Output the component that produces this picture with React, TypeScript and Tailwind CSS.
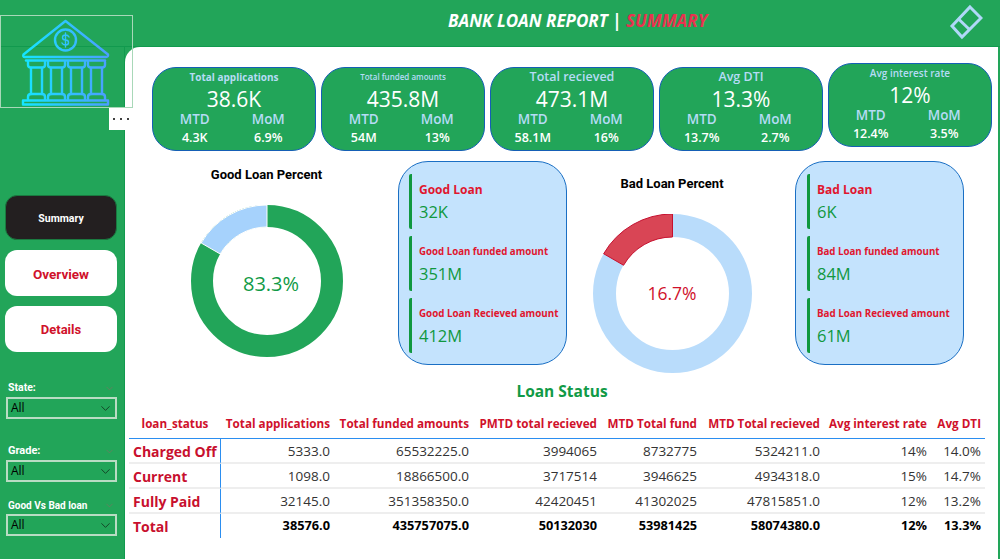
import { ChevronDown } from 'lucide-react';

const kpis = [
  { title: 'Total applications', titleClass: 'text-[10px] font-bold', value: '38.6K', mtd: '4.3K', mom: '6.9%' },
  { title: 'Total funded amounts', titleClass: 'text-[8px] font-semibold', value: '435.8M', mtd: '54M', mom: '13%' },
  { title: 'Total recieved', titleClass: 'text-[12.5px] font-semibold', value: '473.1M', mtd: '58.1M', mom: '16%' },
  { title: 'Avg DTI', titleClass: 'text-[12.5px] font-semibold', value: '13.3%', mtd: '13.7%', mom: '2.7%' },
  { title: 'Avg interest rate', titleClass: 'text-[10px] font-semibold', value: '12%', mtd: '12.4%', mom: '3.5%', raised: true },
];

const rows = [
  ['Charged Off', '5333.0', '65532225.0', '3994065', '8732775', '5324211.0', '14%', '14.0%'],
  ['Current', '1098.0', '18866500.0', '3717514', '3946625', '4934318.0', '15%', '14.7%'],
  ['Fully Paid', '32145.0', '351358350.0', '42420451', '41302025', '47815851.0', '12%', '13.2%'],
];
const totals = ['Total', '38576.0', '435757075.0', '50132030', '53981425', '58074380.0', '12%', '13.3%'];
const headers = ['Total applications', 'Total funded amounts', 'PMTD total recieved', 'MTD Total fund', 'MTD Total recieved', 'Avg interest rate', 'Avg DTI'];

const BankLogo = () => (
  <svg width="100" height="92" viewBox="0 0 100 92" fill="none" strokeWidth="2.4" strokeLinejoin="round" strokeLinecap="round">
    <defs>
      <linearGradient id="bank" gradientUnits="userSpaceOnUse" x1="8" y1="0" x2="94" y2="0">
        <stop offset="0" stopColor="#14e6ff" />
        <stop offset="1" stopColor="#4c9dff" />
      </linearGradient>
    </defs>
    <g stroke="url(#bank)">
      <path d="M50.5 5 L93 38.5 Q93.5 41 91 41 H10 Q7.5 41 8.5 38.5 Z" />
      <circle cx="50.5" cy="24" r="10.5" />
      <path d="M11 44.5 H90" />
      <path d="M8 84.5 H93 V88.5 H8 Z" />
      <path d="M13 46 V49 Q13 51.5 16 51.5 H27 Q30 51.5 30 49 V46" />
      <path d="M33 46 V49 Q33 51.5 36 51.5 H47 Q50 51.5 50 49 V46" />
      <path d="M53 46 V49 Q53 51.5 56 51.5 H67 Q70 51.5 70 49 V46" />
      <path d="M73 46 V49 Q73 51.5 76 51.5 H87 Q90 51.5 90 49 V46" />
      <path d="M16 52 V78 M27 52 V78 M36 52 V78 M47 52 V78 M56 52 V78 M67 52 V78 M76 52 V78 M87 52 V78" />
      <path d="M13 84 V81 Q13 78 16 78 H27 Q30 78 30 81 V84" />
      <path d="M33 84 V81 Q33 78 36 78 H47 Q50 78 50 81 V84" />
      <path d="M53 84 V81 Q53 78 56 78 H67 Q70 78 70 81 V84" />
      <path d="M73 84 V81 Q73 78 76 78 H87 Q90 78 90 81 V84" />
      <path d="M54 21 Q53 19 50.5 19 Q47.5 19 47.5 21.5 Q47.5 24 50.5 24 Q53.5 24 53.5 26.5 Q53.5 29 50.5 29 Q48 29 47 27 M50.5 17 V31" strokeWidth="1.4" />
    </g>
  </svg>
);

const DiamondIcon = () => (
  <svg width="34" height="36" viewBox="0 0 34 36" fill="none" stroke="#b0d8f8" strokeWidth="3" strokeLinejoin="miter">
    <path d="M21 3 L32 14 L13 33 L3 22 Z" />
    <path d="M9 14.5 L21 26" />
  </svg>
);

const polar = (c: number, r: number, deg: number) => {
  const a = ((deg - 90) * Math.PI) / 180;
  return `${c + r * Math.cos(a)} ${c + r * Math.sin(a)}`;
};

// ring with the small slice drawn from 12 o'clock going counter-clockwise
const Donut = ({ size, thick, main, slice, sliceStroke, seam, label, labelClass }: {
  size: number; thick: number; main: string; slice: string; sliceStroke?: string; seam: string; label: string; labelClass: string;
}) => {
  const c = size / 2;
  const r = c - thick / 2;
  const o = c;
  const i = c - thick;
  const path = `M${polar(c, o, 0)} A${o} ${o} 0 0 0 ${polar(c, o, -60)} L${polar(c, i, -60)} A${i} ${i} 0 0 1 ${polar(c, i, 0)} Z`;
  return (
    <div className="relative" style={{ width: size, height: size }}>
      <svg width={size} height={size} viewBox={`0 0 ${size} ${size}`}>
        <circle cx={c} cy={c} r={r} fill="none" stroke={main} strokeWidth={thick} />
        <path d={path} fill={slice} stroke={sliceStroke ?? seam} strokeWidth="1" />
      </svg>
      <div className={`absolute inset-0 flex items-center justify-center font-normal ${labelClass}`}>{label}</div>
    </div>
  );
};

const LoanPanel = ({ items, inset }: { items: { label: string; labelClass: string; value: string }[]; inset: string }) => (
  <div className={`w-[169px] h-[204px] rounded-[30px] border border-[#1a6fc4] bg-[#c4e3fd] pt-[12px] flex flex-col gap-[7px] ${inset}`}>
    {items.map((item) => (
      <div key={item.label} className="h-[55px] border-l-[3px] border-[#10983f] rounded-l-[2px] pl-[7px] pt-[2px] flex flex-col justify-center">
        <div className={`text-[#e0162e] font-bold leading-[16px] ${item.labelClass}`}>{item.label}</div>
        <div className="text-[#10983f] text-[16.5px] leading-[24px] mt-[2px]">{item.value}</div>
      </div>
    ))}
  </div>
);

const KpiCard = ({ kpi }: { kpi: (typeof kpis)[number] }) => (
  <div className={`w-[164px] h-[84px] rounded-[24px] border border-[#155fb5] bg-[#22a559] text-white flex flex-col items-center ${kpi.raised ? '-mt-[4px]' : ''}`}>
    <div className={`text-[#b6dcf6] leading-[16px] h-[17px] flex items-center ${kpi.titleClass}`}>{kpi.title}</div>
    <div className="text-[21px] leading-[20px] mt-[4px]">{kpi.value}</div>
    <div className="w-full grid grid-cols-2 pl-[5px] pr-[10px] mt-[2px]">
      <div className="text-center">
        <div className="text-[#b6dcf6] text-[13.5px] font-semibold leading-[17px]">MTD</div>
        <div className="text-[12.5px] font-semibold leading-[16px] mt-[2px]">{kpi.mtd}</div>
      </div>
      <div className="text-center">
        <div className="text-[#b6dcf6] text-[13.5px] font-semibold leading-[17px]">MoM</div>
        <div className="text-[12.5px] font-semibold leading-[16px] mt-[2px]">{kpi.mom}</div>
      </div>
    </div>
  </div>
);

const Filter = ({ label, spacing, size }: { label: string; spacing: string; size: string }) => (
  <div className={spacing}>
    <div className={`flex items-center justify-between pl-[8px] pr-[9px] h-[14px] text-white font-bold font-['Roboto',sans-serif] ${size}`}>
      <span>{label}</span>
      <ChevronDown size={11} className="text-[#8c6a62]" strokeWidth={1.2} />
    </div>
    <div className="ml-[6px] w-[111px] h-[22px] mt-[2px] border-2 border-[#b9dcc4] flex items-center justify-between pl-[3px] pr-[2px] text-[12px] text-black">
      <span>All</span>
      <ChevronDown size={15} className="text-[#10301c]" strokeWidth={1.3} />
    </div>
  </div>
);

const App = () => {
  return (
    <div className="w-[1000px] h-[559px] overflow-hidden bg-[#22a559] flex flex-col font-['Open_Sans',sans-serif]">
      <header className="h-[47px] shrink-0 flex items-center relative border-b border-[#119a4e]">
        <div className="ml-[448px] -mt-[4px] text-[17px] font-bold italic text-white">
          BANK LOAN REPORT | <span className="text-[#e8324f]">SUMMARY</span>
        </div>
        <div className="absolute right-[17px] top-[4px]">
          <DiamondIcon />
        </div>
      </header>
      <div className="flex flex-1 min-h-0">
        <aside className="w-[125px] shrink-0 border-r border-[#119a4e] flex flex-col relative">
          <div className="relative z-10 -mt-[32px] w-[133px] h-[93px] border border-[#a8d8b8] pl-[14px] shrink-0">
            <BankLogo />
          </div>
          <div className="absolute left-[109px] top-[61px] w-[22px] h-[22px] bg-white flex items-center pl-[4px] gap-[5px] z-10">
            <span className="w-[2px] h-[2px] rounded-full bg-black" />
            <span className="w-[2px] h-[2px] rounded-full bg-black" />
            <span className="w-[2px] h-[2px] rounded-full bg-black" />
          </div>
          <nav className="mt-[87px] pl-[5px] flex flex-col gap-[10px] w-[117px] font-['Roboto',sans-serif]">
            <div className="h-[45px] rounded-[12px] bg-[#231f20] border border-[#1a7a40] pt-[2px] text-white text-[10.5px] font-bold flex items-center justify-center">Summary</div>
            <div className="h-[46px] rounded-[12px] bg-white pt-[3px] text-[#d0112b] text-[13.5px] font-bold flex items-center justify-center">Overview</div>
            <div className="h-[46px] rounded-[12px] bg-white pt-[2px] text-[#d0112b] text-[13px] font-bold flex items-center justify-center">Details</div>
          </nav>
          <Filter label="State:" spacing="mt-[29px]" size="text-[10.5px]" />
          <Filter label="Grade:" spacing="mt-[25px]" size="text-[11px]" />
          <Filter label="Good Vs Bad loan" spacing="mt-[16px]" size="text-[10px]" />
        </aside>
        <main className="flex-1 mr-[2px] bg-white rounded-tl-[15px] flex flex-col min-w-0">
          <section className="flex gap-[5px] pl-[27px] pt-[20px]">
            {kpis.map((kpi) => (
              <KpiCard key={kpi.title} kpi={kpi} />
            ))}
          </section>
          <section className="flex mt-[10px] h-[204px]">
            <div className="ml-[54px] w-[175px] flex flex-col items-center">
              <div className="text-[13px] font-bold text-black font-['Roboto',sans-serif] leading-[16px] mt-[6px]">Good Loan Percent</div>
              <div className="mt-[22px]">
                <Donut size={152} thick={22} main="#22a559" slice="#a6d2fc" seam="#ffffff" label="83.3%" labelClass="text-[20px] text-[#109a46] pl-[9px] pt-[5px]" />
              </div>
            </div>
            <div className="ml-[44px]">
              <LoanPanel
                inset="pl-[10px]"
                items={[
                  { label: 'Good Loan', labelClass: 'text-[12px]', value: '32K' },
                  { label: 'Good Loan funded amount', labelClass: 'text-[9.7px]', value: '351M' },
                  { label: 'Good Loan Recieved amount', labelClass: 'text-[9.8px]', value: '412M' },
                ]}
              />
            </div>
            <div className="ml-[16px] w-[178px] flex flex-col items-center">
              <div className="text-[13px] font-bold text-black font-['Roboto',sans-serif] leading-[16px] mt-[15px]">Bad Loan Percent</div>
              <div className="mt-[22px]">
                <Donut size={159} thick={23} main="#b9dcfb" slice="#d94555" sliceStroke="#c8102e" seam="#ffffff" label="16.7%" labelClass="text-[17.5px] text-[#d0112b]" />
              </div>
            </div>
            <div className="ml-[34px]">
              <LoanPanel
                inset="pl-[11px]"
                items={[
                  { label: 'Bad Loan', labelClass: 'text-[12px]', value: '6K' },
                  { label: 'Bad Loan funded amount', labelClass: 'text-[9.7px]', value: '84M' },
                  { label: 'Bad Loan Recieved amount', labelClass: 'text-[9.8px]', value: '61M' },
                ]}
              />
            </div>
          </section>
          <h2 className="ml-[9px] w-[856px] text-center text-[#109a46] text-[15.5px] font-bold leading-[20px] mt-[16px]">Loan Status</h2>
          <table className="ml-[4px] w-[856px] table-fixed border-separate border-spacing-0 mt-[9px]">
            <colgroup>
              <col className="w-[92px]" />
              <col className="w-[109px]" />
              <col className="w-[139px]" />
              <col className="w-[128px]" />
              <col className="w-[100px]" />
              <col className="w-[123px]" />
              <col className="w-[107px]" />
              <col className="w-[58px]" />
            </colgroup>
            <thead>
              <tr className="h-[29px] text-[#d0112b] text-[11.7px] whitespace-nowrap [&>th]:border-b [&>th]:border-b-[#2b8ef0]">
                <th className="font-bold text-center">loan_status</th>
                {headers.map((h, i) => (
                  <th key={h} className={`font-bold text-right ${i === 6 ? 'pr-[4px]' : ''}`}>{h}</th>
                ))}
              </tr>
            </thead>
            <tbody>
              {rows.map((row) => (
                <tr key={row[0]} className="h-[25px] text-[13.5px] text-[#333333] [&>td]:border-b-2 [&>td]:border-b-[#eeeeee]">
                  {row.map((cell, i) =>
                    i === 0 ? (
                      <td key={i} className="pl-[4px] pt-[2px] border-r border-r-[#2b8ef0] text-[#c8102e] text-[14px] font-bold whitespace-nowrap">{cell}</td>
                    ) : (
                      <td key={i} className={`text-right pt-[2px] ${i === 7 ? 'pr-[4px]' : ''}`}>{cell}</td>
                    )
                  )}
                </tr>
              ))}
              <tr className="h-[24px] text-[12.75px] font-bold text-black">
                {totals.map((cell, i) =>
                  i === 0 ? (
                    <td key={i} className="pl-[4px] border-r border-r-[#2b8ef0] text-[#c8102e] text-[14px] font-bold">{cell}</td>
                  ) : (
                    <td key={i} className={`text-right ${i === 7 ? 'pr-[4px]' : ''}`}>{cell}</td>
                  )
                )}
              </tr>
            </tbody>
          </table>
        </main>
      </div>
    </div>
  );
};

export default App;
